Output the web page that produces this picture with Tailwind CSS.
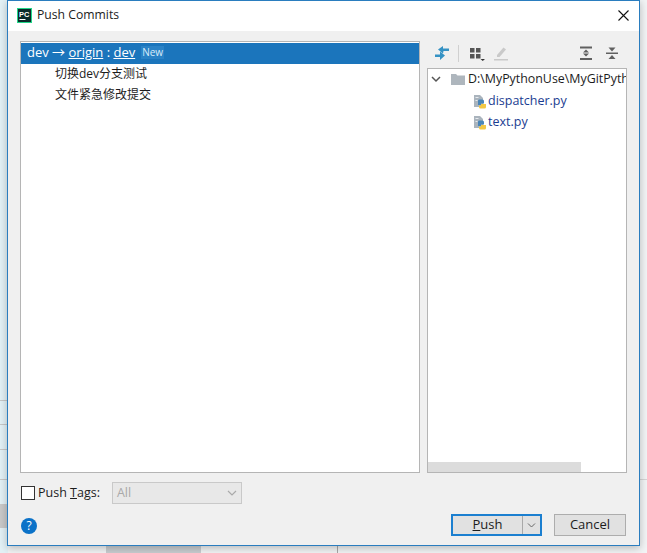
<!DOCTYPE html>
<html lang="en">
<head>
  <meta charset="UTF-8" />
  <title>Push Commits</title>
  <script src="https://cdn.jsdelivr.net/npm/@tailwindcss/browser@4"></script>
</head>
<body class="relative w-[647px] h-[553px] overflow-hidden bg-[#f2f4f5] font-['Open_Sans','Noto_Sans_CJK_SC',sans-serif] text-[12.5px] text-[#1c1c1c]">

  <!-- Desktop behind the dialog -->
  <div class="absolute left-0 top-0 w-[8px] h-[553px] bg-[#e3f1f6]"></div>
  <div class="absolute left-0 top-[400px] w-[8px] h-[1px] bg-[#c8c8c8]"></div>
  <div class="absolute left-0 top-[424px] w-[8px] h-[1px] bg-[#c8c8c8]"></div>
  <div class="absolute left-0 top-[449px] w-[8px] h-[1px] bg-[#c8c8c8]"></div>
  <div class="absolute left-0 top-[479px] w-[8px] h-[1px] bg-[#c8c8c8]"></div>
  <div class="absolute left-0 top-[504px] w-[8px] h-[24px] bg-[#c9c9c9]"></div>
  <div class="absolute left-[640px] top-[479px] w-[7px] h-[1px] bg-[#d5d5d5]"></div>
  <div class="absolute left-[106px] top-[546px] w-[95px] h-[7px] bg-[#c9cdd0]"></div>
  <div class="absolute left-[337px] top-[546px] w-[1px] h-[7px] bg-[#a8a8a8]"></div>

  <!-- Dialog -->
  <div class="absolute left-[7px] top-0 w-[633px] h-[546px] flex flex-col border border-[#2a7dbf] bg-[#f0f0f0] shadow-[0_2px_8px_rgba(0,0,0,0.25)]">

    <!-- Title bar -->
    <div class="h-[30px] shrink-0 bg-white flex items-center pl-[9px] pr-[10px] pb-[1px]">
      <svg width="15" height="15" viewBox="0 0 15 15" class="shrink-0">
        <rect width="15" height="15" fill="#0b2a2a" />
        <path d="M0 0h15v1H0zM0 14h15v1H0zM0 0h1v15H0zM14 0h1v15h-1z" fill="#21d789" />
        <text x="2" y="8.500" font-size="7.500" font-weight="700" fill="#fff" font-family="Liberation Sans">PC</text>
        <rect x="2.500" y="11" width="6" height="1" fill="#fff" />
      </svg>
      <span class="ml-[5px] text-[12.2px] leading-none">Push Commits</span>
      <svg width="11" height="11" viewBox="0 0 11 11" class="ml-auto" stroke="#111" stroke-width="1.100" fill="none">
        <path d="M.5 .5l10 10M10.500 .5l-10 10" />
      </svg>
    </div>

    <!-- Panels -->
    <div class="flex pl-[12px] pt-[10px] gap-[7px] h-[442px] shrink-0">

      <!-- Commit list -->
      <div class="w-[400px] h-[432px] border border-[#b5b5b5] bg-white pt-[1px]">
        <div class="h-[21px] bg-[#1b75bc] text-white flex items-center pl-[6px] pb-[2px] text-[13px]">
          <span>dev → <span class="underline">origin</span> : <span class="underline">dev</span></span>
          <span class="ml-[6px] text-[10px] text-[#d9ecf9] bg-[#2a82c6] px-[1px] leading-[13px]">New</span>
        </div>
        <div class="h-[21px] flex items-center pl-[34px] pb-[2px] text-[12px]">切换dev分支测试</div>
        <div class="h-[21px] flex items-center pl-[34px] pb-[2px] text-[12px]">文件紧急修改提交</div>
      </div>

      <!-- Changes -->
      <div class="w-[200px] flex flex-col">
        <div class="h-[24px] mb-[3px] shrink-0 flex items-center">
          <svg width="16" height="16" viewBox="0 0 16 16" class="ml-[7px] shrink-0" fill="#3592c4">
            <path d="M4 4.500L9 1v2.500h6V6H9.500L9 8.500z" />
            <path d="M11 10.500L6 15v-3H1V9.500h5V6.500z" />
          </svg>
          <div class="w-[1px] h-[17px] bg-[#d0d0d0] ml-[8px]"></div>
          <svg width="16" height="16" viewBox="0 0 16 16" class="ml-[11px] shrink-0">
            <path d="M0 3h4.500v4.500H0zM6 3h4.500v4.500H6zM0 9h4.500v4.500H0zM6 9h4.500v4.500H6z" fill="#555" />
            <path d="M10.500 14h4.500l-2.250 2z" fill="#333" />
          </svg>
          <svg width="14" height="16" viewBox="0 0 14 16" class="ml-[8px] shrink-0">
            <path d="M3 10l6.500-7.500 2.500 2L5.500 12H3z" fill="#c9c9c9" />
            <path d="M0 14h14v1.500H0z" fill="#c9c9c9" />
          </svg>
          <svg width="14" height="16" viewBox="0 0 14 16" class="ml-auto mr-[12px] shrink-0">
            <path d="M1 1.500h12V3.500H1zM1 13h12v2H1zM7 4.500l3 3H4zM7 11.500l-3-3h6z" fill="#606060" />
          </svg>
          <svg width="14" height="16" viewBox="0 0 14 16" class="mr-[8px] shrink-0">
            <path d="M1 7.500h12V9H1zM7 6.500L3.500 2.500h7zM7 10l3.500 4h-7z" fill="#606060" />
          </svg>
        </div>

        <div class="relative h-[405px] border border-[#b5b5b5] bg-white overflow-hidden">
          <div class="h-[20px] flex items-center whitespace-nowrap">
            <svg width="10" height="7" viewBox="0 0 10 7" class="ml-[3px] shrink-0" stroke="#555" stroke-width="1.500" fill="none">
              <path d="M1 1l4 4 4-4" />
            </svg>
            <svg width="14" height="11" viewBox="0 0 14 11" class="ml-[10px] shrink-0">
              <path d="M0 0h5l1.500 1.500H14V11H0z" fill="#aeb6bd" />
            </svg>
            <span class="ml-[3px] text-[12.4px]">D:\MyPythonUse\MyGitPyth</span>
          </div>
          <div class="h-[21px] mt-[2px] flex items-center pl-[45px] text-[#1b3c91]">
            <svg width="15" height="15" viewBox="0 0 15 15" class="shrink-0">
              <path d="M1 1h6l3 3v9H1z" fill="#aab4bd" />
              <path d="M2.500 3h3v1h-3zM2.500 6h2v1h-2z" fill="#e6eaee" />
              <path d="M6 5.500h3.500A1.500 1.500 0 0 1 11 7v2.500H8V11H5V7a1.500 1.500 0 0 1 1-1.500z" fill="#4a86b8" />
              <path d="M8 10h5v3a1.500 1.500 0 0 1-1.500 1.500H7.500A1.500 1.500 0 0 1 6 13v-1.500h2z" fill="#f2c744" />
            </svg>
            <span>dispatcher.py</span>
          </div>
          <div class="h-[21px] flex items-center pl-[45px] text-[#1b3c91]">
            <svg width="15" height="15" viewBox="0 0 15 15" class="shrink-0">
              <path d="M1 1h6l3 3v9H1z" fill="#aab4bd" />
              <path d="M2.500 3h3v1h-3zM2.500 6h2v1h-2z" fill="#e6eaee" />
              <path d="M6 5.500h3.500A1.500 1.500 0 0 1 11 7v2.500H8V11H5V7a1.500 1.500 0 0 1 1-1.500z" fill="#4a86b8" />
              <path d="M8 10h5v3a1.500 1.500 0 0 1-1.500 1.500H7.500A1.500 1.500 0 0 1 6 13v-1.500h2z" fill="#f2c744" />
            </svg>
            <span>text.py</span>
          </div>
          <!-- horizontal scrollbar -->
          <div class="absolute left-0 bottom-0 w-[153px] h-[10px] bg-[#dcdcdc]"></div>
        </div>
      </div>
    </div>

    <!-- Push tags -->
    <div class="flex items-center h-[22px] mt-[9px] pl-[13px] shrink-0">
      <div class="w-[14px] h-[14px] border border-[#333] bg-white"></div>
      <span class="ml-[3px]">Push <span class="underline">T</span>ags:</span>
      <div class="ml-[12px] w-[130px] h-[22px] border border-[#c9c9c9] bg-[#e8e8e8] flex items-center pl-[4px] text-[#a9a9a9]">
        All
        <svg width="10" height="6" viewBox="0 0 10 6" class="ml-auto mr-[4px]" stroke="#aaa" stroke-width="1.200" fill="none"><path d="M1 1l4 4 4-4" /></svg>
      </div>
    </div>

    <!-- Buttons -->
    <div class="flex items-center pl-[13px] pr-[13px] mt-[10px]">
      <div class="w-[16px] h-[16px] mt-[2px] rounded-full bg-[#0b72c8] text-white text-[12px] leading-[16px] text-center">?</div>
      <div class="ml-auto flex w-[91px] h-[22px] border-2 border-[#1b7fd0] bg-[#e1e1e1]">
        <div class="w-[70px] flex items-center justify-center border-r border-[#a8a8a8] text-[13px]"><span><span class="underline">P</span>ush</span></div>
        <div class="flex-1 flex items-center justify-center">
          <svg width="9" height="5" viewBox="0 0 9 5" stroke="#666" fill="none"><path d="M1 .5l3.500 3.500L8 .5" /></svg>
        </div>
      </div>
      <div class="ml-[12px] w-[72px] h-[22px] border border-[#adadad] bg-[#e1e1e1] flex items-center justify-center text-[13px]">Cancel</div>
    </div>
  </div>

</body>
</html>
